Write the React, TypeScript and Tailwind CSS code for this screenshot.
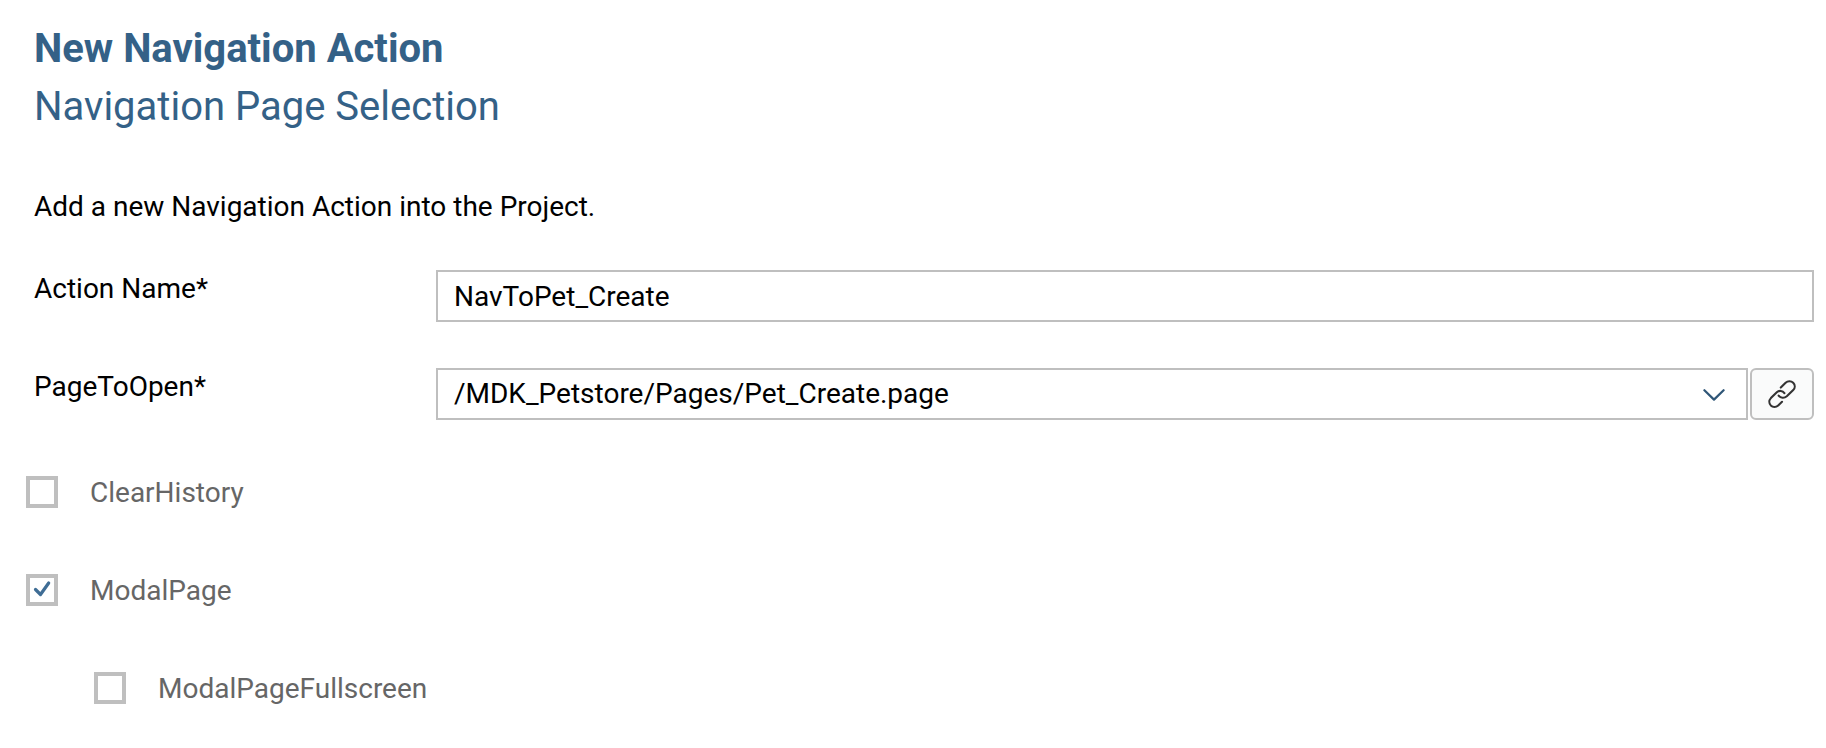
import { useState } from "react";

const checkboxClass =
  "col-start-1 row-start-1 size-8 appearance-none border-4 border-[#bfbfbf] bg-white";

function CheckRow({
  id,
  label,
  initial = false,
  nested = false,
}: {
  id: string;
  label: string;
  initial?: boolean;
  nested?: boolean;
}) {
  const [checked, setChecked] = useState(initial);
  return (
    <div className={nested ? "flex h-13 items-center gap-8 pl-15" : "-ml-2 flex h-13 items-center gap-8"}>
      <span className="grid place-items-center">
        <input
          id={id}
          type="checkbox"
          checked={checked}
          onChange={(e) => setChecked(e.target.checked)}
          className={checkboxClass}
        />
        {checked && (
          <svg
            viewBox="0 0 32 32"
            className="pointer-events-none col-start-1 row-start-1 size-8"
            fill="none"
            stroke="#3f6d95"
            strokeWidth="3.2"
            strokeLinecap="round"
            strokeLinejoin="round"
            aria-hidden="true"
          >
            <path d="M9.5 15.5 14.5 20.5 22.7 9" />
          </svg>
        )}
      </span>
      <label htmlFor={id} className="pt-0.5 leading-9 text-[#666]">
        {label}
      </label>
    </div>
  );
}

export default function App() {
  const [name, setName] = useState("NavToPet_Create");
  return (
    <main className="min-h-screen bg-white pt-[25px] pr-3 pb-8 pl-[34px] font-['Roboto',sans-serif] text-[28px] text-black">
      <h1 className="text-[40px] leading-12 font-bold text-[#346187]">New Navigation Action</h1>
      <h2 className="mt-2.5 text-[40px] leading-12 text-[#346187]">Navigation Page Selection</h2>
      <p className="mt-[58px] leading-9">Add a new Navigation Action into the Project.</p>
      <form className="mt-[45px] flex flex-col gap-[46px]" onSubmit={(e) => e.preventDefault()}>
        <div className="grid grid-cols-[402px_1fr]">
          <label htmlFor="action-name" className="leading-[38px]">
            Action Name*
          </label>
          <input
            id="action-name"
            type="text"
            value={name}
            onChange={(e) => setName(e.target.value)}
            className="h-13 w-full min-w-0 border-2 border-[#bfbfbf] bg-white px-4 outline-none"
          />
        </div>
        <div className="grid grid-cols-[402px_1fr]">
          <label htmlFor="page-to-open" className="leading-[38px]">
            PageToOpen*
          </label>
          <div className="flex gap-0.5">
            <div className="grid min-w-0 flex-1 items-center">
              <select
                id="page-to-open"
                className="col-start-1 row-start-1 h-13 w-full appearance-none border-2 border-[#bfbfbf] bg-white px-4 outline-none"
              >
                <option>/MDK_Petstore/Pages/Pet_Create.page</option>
              </select>
              <svg
                viewBox="0 0 24 14"
                className="pointer-events-none col-start-1 row-start-1 mr-[22px] h-3.5 w-6 justify-self-end"
                fill="none"
                stroke="#2f5677"
                strokeWidth="2.2"
                strokeLinecap="round"
                strokeLinejoin="round"
                aria-hidden="true"
              >
                <path d="M2.4 3.2 12 12.6 21.6 3.2" />
              </svg>
            </div>
            <button
              type="button"
              aria-label="Link"
              className="flex h-13 w-16 items-center justify-center rounded-md border-2 border-[#bfbfbf] bg-[#fafbfb]"
            >
              <svg
                viewBox="0 0 28 28"
                className="size-7"
                fill="none"
                stroke="#333"
                strokeWidth="2.1"
                strokeLinecap="round"
                aria-hidden="true"
              >
                <path d="M12.8 7.6 17.6 2.8C19.7 .8 23.2 .8 25.2 2.8C27.3 4.9 27.2 8 25.2 10.1L18.8 16.3C16.2 18.6 12.6 18.2 10.6 15.6" />
                <path d="M14 21.8 10.2 25.4C8 27.4 4.8 27.4 2.8 25.4C.8 23.3 .9 20.2 2.9 18.1L8.8 12.3C11.2 10.1 14.6 10.6 16.4 13.2" />
              </svg>
            </button>
          </div>
        </div>
        <CheckRow id="clear-history" label="ClearHistory" />
        <CheckRow id="modal-page" label="ModalPage" initial />
        <CheckRow id="modal-page-fullscreen" label="ModalPageFullscreen" nested />
      </form>
    </main>
  );
}
